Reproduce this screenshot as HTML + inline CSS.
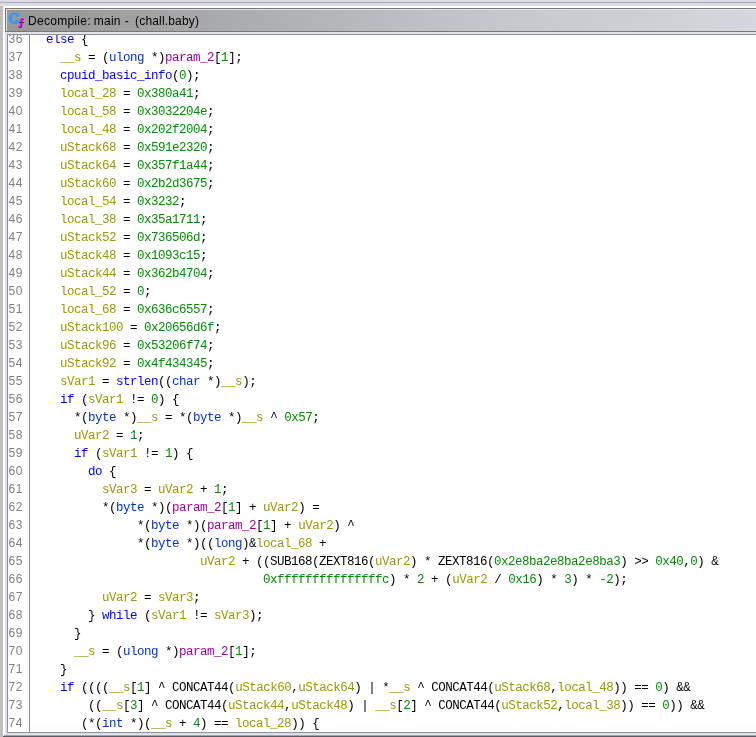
<!DOCTYPE html>
<html><head><meta charset="utf-8"><title>Decompile</title>
<style>
html,body{margin:0;padding:0;}
body{width:756px;height:737px;overflow:hidden;background:#fff;position:relative;font-family:"Liberation Sans",sans-serif;}
.abs{position:absolute;}
#top1{left:0;top:0;width:756px;height:6px;background:#d9dce3;}
#top2{left:0;top:2px;width:756px;height:1px;background:#a9acb4;}
#leftg{left:0;top:6px;width:3px;height:731px;background:#bfbfbf;}
#panel{left:5px;top:8px;width:751px;height:727px;background:#dee1e8;}
#title{left:5px;top:8px;width:760px;height:22px;border:1px solid #777777;background:linear-gradient(to right,#989898 0px,#9a9a9a 60px,#c4c6ca 480px,#d5d7de 751px);}
#title .hl{position:absolute;left:0;top:0;width:760px;height:1px;background:rgba(236,238,244,0.8);}
#title .hl2{position:absolute;left:0;top:0;width:1px;height:22px;background:#dfe1e8;}
#ttext{will-change:transform;transform:translateZ(0);left:28.3px;top:13px;font-size:12px;letter-spacing:0.23px;color:#000;white-space:pre;line-height:16px;}
#content{left:7px;top:34px;width:760px;height:697px;border:1px solid #8d919d;background:#fff;overflow:hidden;}
#code{left:0;top:0;width:756px;height:737px;clip-path:inset(35px 0 5px 8px);will-change:transform;transform:translateZ(0);}
#sep{left:29px;top:35px;width:1px;height:697px;background:#8a8a8a;}
.ln{position:absolute;left:32px;height:18px;line-height:18px;white-space:pre;font-family:"Liberation Mono",monospace;font-size:12.5px;letter-spacing:-0.5px;color:#000;padding-top:2px;transform-origin:0 0;transform:scale(1,1);-webkit-text-stroke:0px;}
.num{position:absolute;left:8.6px;height:18px;line-height:18px;white-space:pre;font-size:12px;letter-spacing:0.4px;color:#7f7f7f;padding-top:1px;}
.k{color:#0000ee;}
.t{color:#0033cc;}
.f{color:#0000ff;}
.v{color:#999900;}
.c{color:#008e00;}
.p{color:#9b009b;}
#bot1{left:4px;top:735px;width:752px;height:1px;background:#a3a6ad;}
#bot2{left:3px;top:736px;width:753px;height:1px;background:#595c63;}
</style></head><body>
<div class="abs" id="top1"></div><div class="abs" id="top2"></div>
<div class="abs" id="leftg"></div>
<div class="abs" id="panel"></div>
<div class="abs" id="title"><div class="hl"></div><div class="hl2"></div></div>
<svg class="abs" id="icon" style="left:0;top:0" width="40" height="34" viewBox="0 0 40 34">
<path d="M12,13 L17,13 L19.1,15 L19.1,17.1 L16.2,17.1 L16.2,16 L15.3,15.1 L13,15.1 L12.1,16 L12.1,20.4 L13,21.3 L15.2,21.3 L15.8,20.7 L15.8,19.9 L19.1,19.9 L19.1,22 L17,24 L12,24 L8.8,21 L8.8,16 Z" fill="#3399ff"/>
<g fill="#ff00ff"><rect x="21" y="18" width="2.2" height="1"/><rect x="20.2" y="19" width="2" height="1"/><rect x="20" y="20" width="1.4" height="2"/><rect x="19.8" y="23" width="1.4" height="3"/><rect x="18" y="26" width="3" height="1"/></g>
<g fill="#990099"><rect x="22.2" y="19" width="1.8" height="1"/><rect x="21.4" y="20" width="1" height="2"/><rect x="19" y="22" width="5" height="1"/><rect x="21.2" y="23" width="1" height="3"/><rect x="21" y="26" width="1" height="1"/><rect x="19" y="27" width="2.4" height="1"/></g>
</svg>
<div class="abs" id="ttext"><span style="letter-spacing:0.28px">Decompile:</span><span style="position:absolute;left:65.8px;top:0">main</span><span style="position:absolute;left:96.7px;top:0">-</span><span style="position:absolute;left:107.1px;top:0;letter-spacing:0.16px">(chall.baby)</span></div>
<div class="abs" id="content"></div>
<div class="abs" id="sep"></div>
<div class="abs" id="code">
<div class="num" style="top:29px">36</div>
<div class="num" style="top:47px">37</div>
<div class="num" style="top:65px">38</div>
<div class="num" style="top:83px">39</div>
<div class="num" style="top:101px">40</div>
<div class="num" style="top:119px">41</div>
<div class="num" style="top:137px">42</div>
<div class="num" style="top:155px">43</div>
<div class="num" style="top:173px">44</div>
<div class="num" style="top:191px">45</div>
<div class="num" style="top:209px">46</div>
<div class="num" style="top:227px">47</div>
<div class="num" style="top:245px">48</div>
<div class="num" style="top:263px">49</div>
<div class="num" style="top:281px">50</div>
<div class="num" style="top:299px">51</div>
<div class="num" style="top:317px">52</div>
<div class="num" style="top:335px">53</div>
<div class="num" style="top:353px">54</div>
<div class="num" style="top:371px">55</div>
<div class="num" style="top:389px">56</div>
<div class="num" style="top:407px">57</div>
<div class="num" style="top:425px">58</div>
<div class="num" style="top:443px">59</div>
<div class="num" style="top:461px">60</div>
<div class="num" style="top:479px">61</div>
<div class="num" style="top:497px">62</div>
<div class="num" style="top:515px">63</div>
<div class="num" style="top:533px">64</div>
<div class="num" style="top:551px">65</div>
<div class="num" style="top:569px">66</div>
<div class="num" style="top:587px">67</div>
<div class="num" style="top:605px">68</div>
<div class="num" style="top:623px">69</div>
<div class="num" style="top:641px">70</div>
<div class="num" style="top:659px">71</div>
<div class="num" style="top:677px">72</div>
<div class="num" style="top:695px">73</div>
<div class="num" style="top:713px">74</div>
<div class="ln" style="top:29px">  <span class="k">else</span> {</div>
<div class="ln" style="top:47px">    <span class="v">__s</span> = (<span class="t">ulong</span> *)<span class="p">param_2</span>[<span class="c">1</span>];</div>
<div class="ln" style="top:65px">    <span class="f">cpuid_basic_info</span>(<span class="c">0</span>);</div>
<div class="ln" style="top:83px">    <span class="v">local_28</span> = <span class="c">0x380a41</span>;</div>
<div class="ln" style="top:101px">    <span class="v">local_58</span> = <span class="c">0x3032204e</span>;</div>
<div class="ln" style="top:119px">    <span class="v">local_48</span> = <span class="c">0x202f2004</span>;</div>
<div class="ln" style="top:137px">    <span class="v">uStack68</span> = <span class="c">0x591e2320</span>;</div>
<div class="ln" style="top:155px">    <span class="v">uStack64</span> = <span class="c">0x357f1a44</span>;</div>
<div class="ln" style="top:173px">    <span class="v">uStack60</span> = <span class="c">0x2b2d3675</span>;</div>
<div class="ln" style="top:191px">    <span class="v">local_54</span> = <span class="c">0x3232</span>;</div>
<div class="ln" style="top:209px">    <span class="v">local_38</span> = <span class="c">0x35a1711</span>;</div>
<div class="ln" style="top:227px">    <span class="v">uStack52</span> = <span class="c">0x736506d</span>;</div>
<div class="ln" style="top:245px">    <span class="v">uStack48</span> = <span class="c">0x1093c15</span>;</div>
<div class="ln" style="top:263px">    <span class="v">uStack44</span> = <span class="c">0x362b4704</span>;</div>
<div class="ln" style="top:281px">    <span class="v">local_52</span> = <span class="c">0</span>;</div>
<div class="ln" style="top:299px">    <span class="v">local_68</span> = <span class="c">0x636c6557</span>;</div>
<div class="ln" style="top:317px">    <span class="v">uStack100</span> = <span class="c">0x20656d6f</span>;</div>
<div class="ln" style="top:335px">    <span class="v">uStack96</span> = <span class="c">0x53206f74</span>;</div>
<div class="ln" style="top:353px">    <span class="v">uStack92</span> = <span class="c">0x4f434345</span>;</div>
<div class="ln" style="top:371px">    <span class="v">sVar1</span> = <span class="f">strlen</span>((<span class="t">char</span> *)<span class="v">__s</span>);</div>
<div class="ln" style="top:389px">    <span class="k">if</span> (<span class="v">sVar1</span> != <span class="c">0</span>) {</div>
<div class="ln" style="top:407px">      *(<span class="t">byte</span> *)<span class="v">__s</span> = *(<span class="t">byte</span> *)<span class="v">__s</span> ^ <span class="c">0x57</span>;</div>
<div class="ln" style="top:425px">      <span class="v">uVar2</span> = <span class="c">1</span>;</div>
<div class="ln" style="top:443px">      <span class="k">if</span> (<span class="v">sVar1</span> != <span class="c">1</span>) {</div>
<div class="ln" style="top:461px">        <span class="k">do</span> {</div>
<div class="ln" style="top:479px">          <span class="v">sVar3</span> = <span class="v">uVar2</span> + <span class="c">1</span>;</div>
<div class="ln" style="top:497px">          *(<span class="t">byte</span> *)(<span class="p">param_2</span>[<span class="c">1</span>] + <span class="v">uVar2</span>) =</div>
<div class="ln" style="top:515px">               *(<span class="t">byte</span> *)(<span class="p">param_2</span>[<span class="c">1</span>] + <span class="v">uVar2</span>) ^</div>
<div class="ln" style="top:533px">               *(<span class="t">byte</span> *)((<span class="t">long</span>)&amp;<span class="v">local_68</span> +</div>
<div class="ln" style="top:551px">                        <span class="v">uVar2</span> + ((SUB168(ZEXT816(<span class="v">uVar2</span>) * ZEXT816(<span class="c">0x2e8ba2e8ba2e8ba3</span>) &gt;&gt; <span class="c">0x40</span>,<span class="c">0</span>) &amp;</div>
<div class="ln" style="top:569px">                                 <span class="c">0xfffffffffffffffc</span>) * <span class="c">2</span> + (<span class="v">uVar2</span> / <span class="c">0x16</span>) * <span class="c">3</span>) * <span class="c">-2</span>);</div>
<div class="ln" style="top:587px">          <span class="v">uVar2</span> = <span class="v">sVar3</span>;</div>
<div class="ln" style="top:605px">        } <span class="k">while</span> (<span class="v">sVar1</span> != <span class="v">sVar3</span>);</div>
<div class="ln" style="top:623px">      }</div>
<div class="ln" style="top:641px">      <span class="v">__s</span> = (<span class="t">ulong</span> *)<span class="p">param_2</span>[<span class="c">1</span>];</div>
<div class="ln" style="top:659px">    }</div>
<div class="ln" style="top:677px">    <span class="k">if</span> ((((<span class="v">__s</span>[<span class="c">1</span>] ^ CONCAT44(<span class="v">uStack60</span>,<span class="v">uStack64</span>) | *<span class="v">__s</span> ^ CONCAT44(<span class="v">uStack68</span>,<span class="v">local_48</span>)) == <span class="c">0</span>) &amp;&amp;</div>
<div class="ln" style="top:695px">        ((<span class="v">__s</span>[<span class="c">3</span>] ^ CONCAT44(<span class="v">uStack44</span>,<span class="v">uStack48</span>) | <span class="v">__s</span>[<span class="c">2</span>] ^ CONCAT44(<span class="v">uStack52</span>,<span class="v">local_38</span>)) == <span class="c">0</span>)) &amp;&amp;</div>
<div class="ln" style="top:713px">       (*(<span class="t">int</span> *)(<span class="v">__s</span> + <span class="c">4</span>) == <span class="v">local_28</span>)) {</div>
</div>
<div class="abs" id="bot1"></div><div class="abs" id="bot2"></div>
</body></html>
